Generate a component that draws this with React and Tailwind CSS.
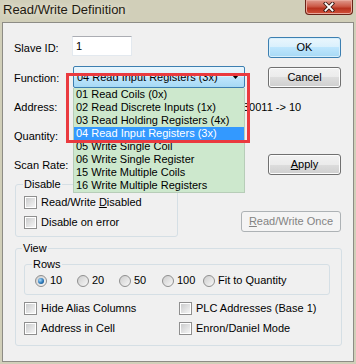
import React from "react";

const FUNCTIONS = [
  "01 Read Coils (0x)",
  "02 Read Discrete Inputs (1x)",
  "03 Read Holding Registers (4x)",
  "04 Read Input Registers (3x)",
  "05 Write Single Coil",
  "06 Write Single Register",
  "15 Write Multiple Coils",
  "16 Write Multiple Registers",
];

const Btn = ({ children, primary, disabled, className = "" }) => (
  <button
    type="button"
    className={`h-[21px] rounded-[3px] border text-[11px] leading-[13px] ${
      primary
        ? "border-[#3c7fb1] bg-[linear-gradient(#eaf6fd,#d9f0fc_50%,#bee6fd_50%,#a7d9f5)] shadow-[inset_0_0_0_1px_#d6effc]"
        : disabled
        ? "border-[#adb2b5] bg-[#f4f4f4] text-[#838383]"
        : "border-[#707070] bg-[linear-gradient(#f2f2f2,#ebebeb_50%,#dddddd_50%,#cfcfcf)] shadow-[inset_0_0_0_1px_#fcfcfc]"
    } ${className}`}
  >
    {children}
  </button>
);

const Checkbox = ({ children }) => (
  <label className="flex h-[13px] items-center">
    <span className="h-[13px] w-[13px] shrink-0 border border-[#8f8f8f] bg-white p-[1px]">
      <span className="block h-full w-full bg-linear-to-br from-[#cbcccd] to-[#f5f5f5]" />
    </span>
    <span className="ml-[4px] whitespace-nowrap leading-[13px]">{children}</span>
  </label>
);

const Radio = ({ checked, children, className = "" }) => (
  <label className={`flex h-[13px] items-center ${className}`}>
    <span className="flex h-[12px] w-[12px] shrink-0 items-center justify-center rounded-full border border-[#8f8f8f] bg-linear-to-br from-[#cdcdcd] to-[#f8f8f8]">
      {checked && (
        <span className="h-[6px] w-[6px] rounded-full bg-[radial-gradient(circle_at_35%_35%,#a8dcff,#2a77b8_55%,#0d3f70)]" />
      )}
    </span>
    <span className="ml-[3px] whitespace-nowrap leading-[13px]">{children}</span>
  </label>
);

const TextBox = ({ value, className = "" }) => (
  <div
    className={`h-[20px] shrink-0 border border-[#e3e9ef] border-t-[#abadb3] bg-white pl-[3px] text-[11px] leading-[18px] ${className}`}
  >
    {value}
  </div>
);

export default function App() {
  return (
    <div className="relative flex h-[364px] w-[356px] flex-col bg-[#d1cfb9] font-[Liberation_Sans,Arial,sans-serif] text-[11px] text-black">
      {/* Title bar */}
      <div className="flex h-[22px] items-start">
        <span className="pl-[3px] pt-[2px] text-[13px] leading-[15px] text-[#1f1a10] [text-shadow:0_0_6px_#f4f3ea]">
          Read/Write Definition
        </span>
        <div className="ml-auto mr-[3px] flex h-[15px] w-[48px] items-center justify-center rounded-b-[4px] border border-t-0 border-[#6a2318] bg-[linear-gradient(#e09a8e,#cc5a48_45%,#b8321f_60%,#d2533b)] shadow-[inset_0_0_0_1px_#e8a89c]">
          <svg width="12" height="10" viewBox="0 0 12 10">
            <path d="M2.5 1.5 L9.5 8.5 M9.5 1.5 L2.5 8.5" stroke="#3b1a16" strokeWidth="3.6" strokeLinecap="square" />
            <path d="M2.5 1.5 L9.5 8.5 M9.5 1.5 L2.5 8.5" stroke="#ffffff" strokeWidth="1.8" strokeLinecap="square" />
          </svg>
        </div>
      </div>

      {/* Client area */}
      <div className="relative mx-[2px] h-[340px] border border-[#8d8c85] bg-[#f0f0f0]">
        {/* Top section */}
        <div className="flex">
          <div className="min-w-0 flex-1 pl-[11px]">
            <div className="mt-[13px] flex h-[20px]">
              <span className="mt-[6px] w-[58px] shrink-0 leading-[13px]">Slave ID:</span>
              <TextBox value="1" className="w-[60px]" />
            </div>

            <div className="mt-[10px] flex h-[22px]">
              <span className="mt-[6px] w-[59px] shrink-0 leading-[13px]">Function:</span>
              <div className="relative h-[22px] w-[172px] shrink-0">
                <div className="flex h-[22px] items-center rounded-[2px] border border-[#3c7fb1] bg-[linear-gradient(#eaf6fd,#d9f0fc_50%,#bee6fd_50%,#a7d9f5)] pl-[3px] pr-[5px]">
                  <span className="whitespace-nowrap leading-[13px]">04 Read Input Registers (3x)</span>
                  <svg className="ml-auto" width="7" height="4" viewBox="0 0 7 4">
                    <path d="M0 0 H7 L3.5 4 Z" fill="#000" />
                  </svg>
                </div>
                <ul className="absolute left-0 top-[22px] z-10 w-[172px] border border-t-0 border-[#b7cdb8] bg-[#cde8cd]">
                  {FUNCTIONS.map((f, i) => (
                    <li
                      key={f}
                      className={`h-[13px] whitespace-nowrap pl-[2px] leading-[13px] ${
                        i === 3 ? "bg-[#3399ff] text-white" : ""
                      }`}
                    >
                      {f}
                    </li>
                  ))}
                </ul>
              </div>
            </div>

            <div className="mt-[9px] flex h-[24px]">
              <span className="mt-[4px] w-[59px] shrink-0 leading-[13px]">Address:</span>
              <TextBox className="w-[58px]" />
              <span className="ml-[112px] mt-[4px] shrink-0 whitespace-nowrap leading-[13px]">30011 -&gt; 10</span>
            </div>

            <div className="mt-[4px] flex h-[24px]">
              <span className="mt-[5px] w-[59px] shrink-0 leading-[13px]">Quantity:</span>
              <TextBox className="w-[58px]" />
            </div>

            <div className="mt-[5px] flex h-[24px]">
              <span className="mt-[5px] w-[59px] shrink-0 leading-[13px]">Scan Rate:</span>
              <TextBox className="w-[58px]" />
            </div>
          </div>

          <div className="mr-[12px] flex w-[73px] shrink-0 flex-col">
            <Btn primary className="mt-[14px]">OK</Btn>
            <Btn className="mt-[9px]">Cancel</Btn>
            <Btn className="mt-[66px]">
              <span className="underline">A</span>pply
            </Btn>
          </div>
        </div>

        {/* Disable row */}
        <div className="flex">
          <fieldset className="ml-[12px] w-[163px] rounded-[3px] border border-[#d5dfe5] pb-[7px] pl-[8px]">
            <legend className="-ml-[1px] px-[1px] leading-[13px]">Disable</legend>
            <div className="mt-[5px]">
              <Checkbox>
                Read/Write <span className="underline">D</span>isabled
              </Checkbox>
            </div>
            <div className="mt-[7px]">
              <Checkbox>Disable on error</Checkbox>
            </div>
          </fieldset>
          <Btn disabled className="ml-auto mr-[12px] mt-[33px] w-[100px]">
            <span className="underline">R</span>ead/Write Once
          </Btn>
        </div>

        {/* View group */}
        <fieldset className="ml-[12px] mt-[5px] w-[327px] rounded-[3px] border border-[#d5dfe5] pb-[10px]">
          <legend className="ml-[6px] px-[1px] leading-[13px]">View</legend>
          <fieldset className="ml-[8px] mt-[3px] w-[306px] rounded-[3px] border border-[#d5dfe5] pb-[7px]">
            <legend className="ml-[7px] px-[1px] leading-[13px]">Rows</legend>
            <div className="mt-[3px] flex pl-[10px]">
              <Radio checked className="w-[42px]">10</Radio>
              <Radio className="w-[42px]">20</Radio>
              <Radio className="w-[43px]">50</Radio>
              <Radio className="w-[41px]">100</Radio>
              <Radio>Fit to Quantity</Radio>
            </div>
          </fieldset>
          <div className="mt-[7px] grid grid-cols-[155px_1fr] gap-y-[7px] pl-[8px]">
            <Checkbox>Hide Alias Columns</Checkbox>
            <Checkbox>PLC Addresses (Base 1)</Checkbox>
            <Checkbox>Address in Cell</Checkbox>
            <Checkbox>Enron/Daniel Mode</Checkbox>
          </div>
        </fieldset>

        {/* Annotation */}
        <div className="pointer-events-none absolute left-[63px] top-[50px] z-20 h-[70px] w-[184px] border-[3px] border-[#ea3a3f]" />
      </div>
    </div>
  );
}
